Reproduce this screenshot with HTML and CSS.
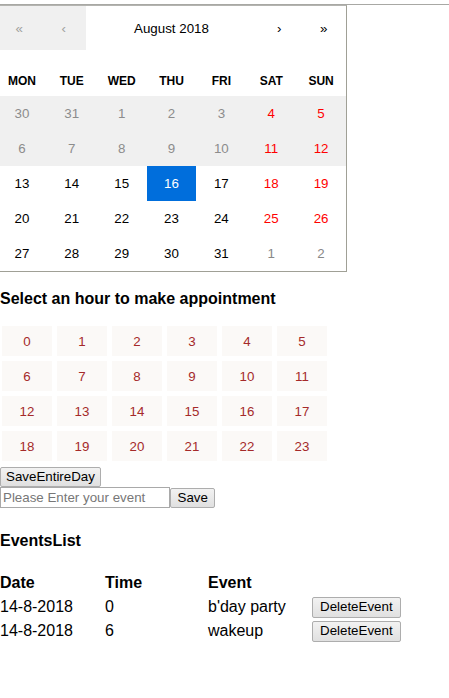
FILE: index.html
```html
<!DOCTYPE html>
<html>
<head>
<meta charset="utf-8">
<link rel="stylesheet" href="styles.css">
</head>
<body>
<div class="topline"></div>
<div class="cal">
  <div class="nav">
    <button class="nav-btn disabled">«</button>
    <button class="nav-btn disabled">‹</button>
    <button class="nav-label">August 2018</button>
    <button class="nav-btn">›</button>
    <button class="nav-btn">»</button>
  </div>
  <div class="weekdays">
    <span>Mon</span><span>Tue</span><span>Wed</span><span>Thu</span><span>Fri</span><span>Sat</span><span>Sun</span>
  </div>
  <div class="days">
    <span class="tile dis">30</span><span class="tile dis">31</span><span class="tile dis">1</span><span class="tile dis">2</span><span class="tile dis">3</span><span class="tile dis we">4</span><span class="tile dis we">5</span>
    <span class="tile dis">6</span><span class="tile dis">7</span><span class="tile dis">8</span><span class="tile dis">9</span><span class="tile dis">10</span><span class="tile dis we">11</span><span class="tile dis we">12</span>
    <span class="tile">13</span><span class="tile">14</span><span class="tile">15</span><span class="tile active">16</span><span class="tile">17</span><span class="tile we">18</span><span class="tile we">19</span>
    <span class="tile">20</span><span class="tile">21</span><span class="tile">22</span><span class="tile">23</span><span class="tile">24</span><span class="tile we">25</span><span class="tile we">26</span>
    <span class="tile">27</span><span class="tile">28</span><span class="tile">29</span><span class="tile">30</span><span class="tile">31</span><span class="tile nb">1</span><span class="tile nb">2</span>
  </div>
</div>

<h4 class="title hour-title">Select an hour to make appointment</h4>
<div class="hours">
  <span class="hour">0</span><span class="hour">1</span><span class="hour">2</span><span class="hour">3</span><span class="hour">4</span><span class="hour">5</span>
  <span class="hour">6</span><span class="hour">7</span><span class="hour">8</span><span class="hour">9</span><span class="hour">10</span><span class="hour">11</span>
  <span class="hour">12</span><span class="hour">13</span><span class="hour">14</span><span class="hour">15</span><span class="hour">16</span><span class="hour">17</span>
  <span class="hour">18</span><span class="hour">19</span><span class="hour">20</span><span class="hour">21</span><span class="hour">22</span><span class="hour">23</span>
</div>
<div class="actions">
  <button class="btn wide">SaveEntireDay</button>
  <div class="entry">
    <input class="field" type="text" placeholder="Please Enter your event">
    <button class="btn">Save</button>
  </div>
</div>

<h4 class="title events-title">EventsList</h4>
<div class="events">
  <div class="ev-row head"><span>Date</span><span>Time</span><span>Event</span><span></span></div>
  <div class="ev-row"><span>14-8-2018</span><span>0</span><span>b'day party</span><span><button class="btn del">DeleteEvent</button></span></div>
  <div class="ev-row"><span>14-8-2018</span><span>6</span><span>wakeup</span><span><button class="btn del">DeleteEvent</button></span></div>
</div>
</body>
</html>
```

FILE: styles.css
```css
html, body {
  margin: 0;
  padding: 0;
  background: #fff;
  font-family: "Liberation Sans", Arial, sans-serif;
  color: #000;
}

.topline {
  height: 4px;
  border-bottom: 1px solid #a8a8a4;
}

.cal {
  width: 349px;
  margin-left: -4px;
  border: 1px solid #a0a096;
  border-top-color: #b4b4b0;
  font-family: "Liberation Sans", Arial, sans-serif;
  line-height: 18px;
  background: #fff;
}

.nav {
  display: flex;
  height: 44px;
  margin-bottom: 16px;
}

.nav button {
  border: 0;
  margin: 0;
  padding: 0;
  background: none;
  font-family: "Liberation Sans", Arial, sans-serif;
  font-size: 13.33px;
  color: #000;
}

.nav-btn {
  width: 44.5px;
  flex: none;
}

.nav-btn.disabled {
  background: #f0f0f0 !important;
  color: #a0a0a0 !important;
}

.nav-label {
  flex: 1;
}

.weekdays {
  display: grid;
  grid-template-columns: repeat(7, 1fr);
  text-align: center;
  text-transform: uppercase;
  font-weight: bold;
  font-size: 12px;
}

.weekdays span {
  padding: 6px;
}

.days {
  display: grid;
  grid-template-columns: repeat(7, 1fr);
}

.tile {
  height: 35px;
  display: flex;
  align-items: center;
  justify-content: center;
  font-size: 13.33px;
  color: #000;
}

.tile.dis {
  background: #f0f0f0;
  color: #8c8c8c;
}

.tile.we {
  color: #ff0000;
}

.tile.nb {
  color: #888;
}

.tile.active {
  background: #006edc;
  color: #fff;
}

.title {
  font-size: 16px;
  font-weight: bold;
  line-height: 18px;
}

.hour-title {
  margin: 18px 0 18px;
}

.hours {
  display: grid;
  grid-template-columns: repeat(6, 50px);
  grid-auto-rows: 30px;
  gap: 5px;
  padding-left: 2px;
}

.hour {
  display: flex;
  align-items: center;
  justify-content: center;
  background: #fbf9f7;
  color: #a52a2a;
  font-size: 13.33px;
}

.actions {
  margin-top: 6px;
  display: flex;
  flex-direction: column;
  align-items: flex-start;
}

.btn {
  font-family: "Liberation Sans", Arial, sans-serif;
  font-size: 13.33px;
  line-height: 16px;
  height: 20px;
  padding: 0 6px;
  margin: 0;
  border: 1px solid #adadad;
  border-radius: 2px;
  background: linear-gradient(#f2f2f2, #e0e0e0);
  color: #000;
}

.btn.wide {
  padding: 0 5px;
}

.btn.del {
  padding: 0 7px;
}

.entry {
  display: flex;
  align-items: center;
}

.field {
  box-sizing: border-box;
  width: 170px;
  height: 21px;
  margin: 0;
  padding: 1px 2px;
  border: 1px solid #a9a9a9;
  font-family: "Liberation Sans", Arial, sans-serif;
  font-size: 13.33px;
}

.field::placeholder {
  color: #777;
}

.entry .btn {
  height: 20px;
  padding: 0 6.5px;
}

.events-title {
  margin: 24px 0 21px;
}

.ev-row {
  display: grid;
  grid-template-columns: 105px 103px 104px auto;
  align-items: center;
  height: 24px;
  font-size: 16px;
  line-height: 18px;
}

.ev-row.head {
  font-weight: bold;
}

.ev-row .btn {
  height: 21px;
  display: block;
}
```
